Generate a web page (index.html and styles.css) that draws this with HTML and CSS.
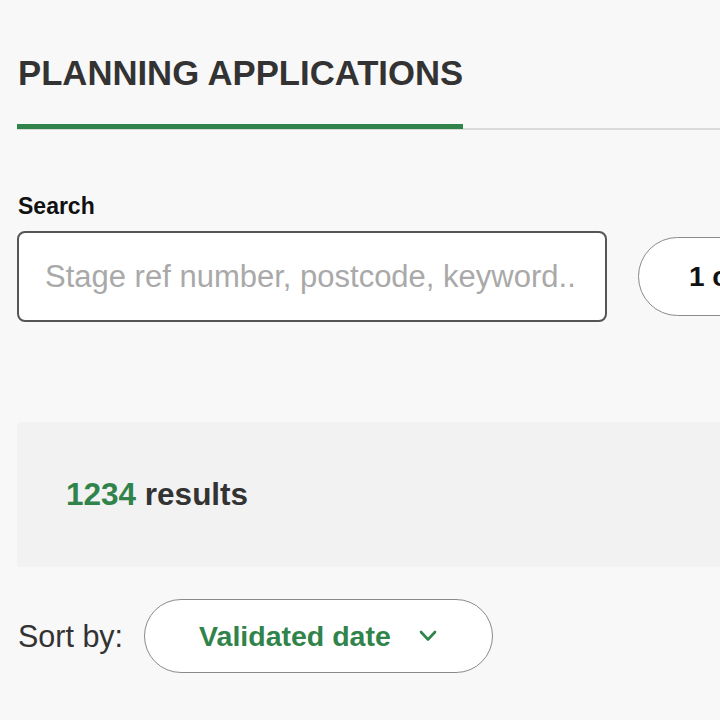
FILE: index.html
```html
<!DOCTYPE html>
<html lang="en">
<head>
<meta charset="utf-8">
<title>Planning applications</title>
<link rel="stylesheet" href="styles.css">
</head>
<body>
<main class="page">
  <header class="tabs">
    <h1 class="tab tab-active">PLANNING APPLICATIONS</h1>
  </header>

  <section class="search">
    <label class="search-label" for="q">Search</label>
    <div class="search-row">
      <input id="q" class="search-input" type="text" placeholder="Stage ref number, postcode, keyword..">
      <button class="filter-btn" type="button">1 column selected</button>
    </div>
  </section>

  <section class="results">
    <p class="results-count"><span class="num">1234</span> results</p>
  </section>

  <div class="sort">
    <span class="sort-label">Sort by:</span>
    <button class="sort-btn" type="button">
      <span>Validated date</span>
      <svg class="chev" width="18" height="12" viewBox="0 0 18 12" aria-hidden="true">
        <path d="M2 2 L9 9.5 L16 2" fill="none" stroke="currentColor" stroke-width="2.6" stroke-linecap="round" stroke-linejoin="round"/>
      </svg>
    </button>
  </div>
</main>
</body>
</html>
```

FILE: styles.css
```css
* { box-sizing: border-box; }
html, body {
  margin: 0;
  padding: 0;
  background: #f8f8f8;
  overflow: hidden;
}
body {
  font-family: "Liberation Sans", Arial, sans-serif;
  color: #333;
  width: 720px;
  height: 720px;
}
.page {
  padding-left: 17px;
  width: 960px;
}
.tabs {
  padding-top: 52px;
  border-bottom: 2px solid #dadada;
  display: flex;
}
.tab {
  margin: 0;
  font-size: 34.7px;
  line-height: 42px;
  font-weight: 700;
  color: #333;
  padding: 0 0 30px 1px;
  width: 446px;
  white-space: nowrap;
}
.tab-active {
  border-bottom: 5px solid #30834a;
  margin-bottom: -1px;
}
.search {
  margin-top: 63px;
}
.search-label {
  display: block;
  font-size: 23px;
  line-height: 27px;
  font-weight: 700;
  color: #111;
  padding-left: 1px;
}
.search-row {
  margin-top: 11px;
  display: flex;
  align-items: center;
  gap: 31px;
}
.search-input {
  flex: none;
  width: 590px;
  height: 91px;
  border: 2px solid #555;
  border-radius: 8px;
  background: #fff;
  padding: 0 0 0 26px;
  font-family: "Liberation Sans", Arial, sans-serif;
  font-size: 31px;
  color: #333;
  outline: none;
}
.search-input::placeholder {
  color: #a9a9a9;
}
.filter-btn {
  flex: none;
  height: 79px;
  border: 1.5px solid #8a8a8a;
  border-radius: 40px;
  background: #fff;
  padding: 0 50px;
  font-family: "Liberation Sans", Arial, sans-serif;
  font-weight: 700;
  font-size: 28px;
  color: #111;
  white-space: nowrap;
}
.results {
  margin-top: 100px;
  height: 145px;
  background: #f2f2f2;
  display: flex;
  align-items: center;
  padding-left: 49px;
  border-radius: 4px 0 0 4px;
}
.results-count {
  margin: 0;
  font-size: 31.5px;
  font-weight: 700;
  color: #333;
}
.num {
  color: #30834a;
}
.sort {
  margin-top: 32px;
  display: flex;
  align-items: center;
  gap: 21px;
}
.sort-label {
  font-size: 30.5px;
  color: #333;
  padding-left: 1px;
}
.sort-btn {
  flex: none;
  width: 349px;
  height: 74px;
  border: 1.5px solid #8a8a8a;
  border-radius: 37px;
  background: #fff;
  display: flex;
  align-items: center;
  padding: 0 0 0 54px;
  gap: 28px;
  font-family: "Liberation Sans", Arial, sans-serif;
  font-weight: 700;
  font-size: 28.5px;
  color: #30834a;
  white-space: nowrap;
}
.chev {
  display: block;
  color: #30834a;
}
```
